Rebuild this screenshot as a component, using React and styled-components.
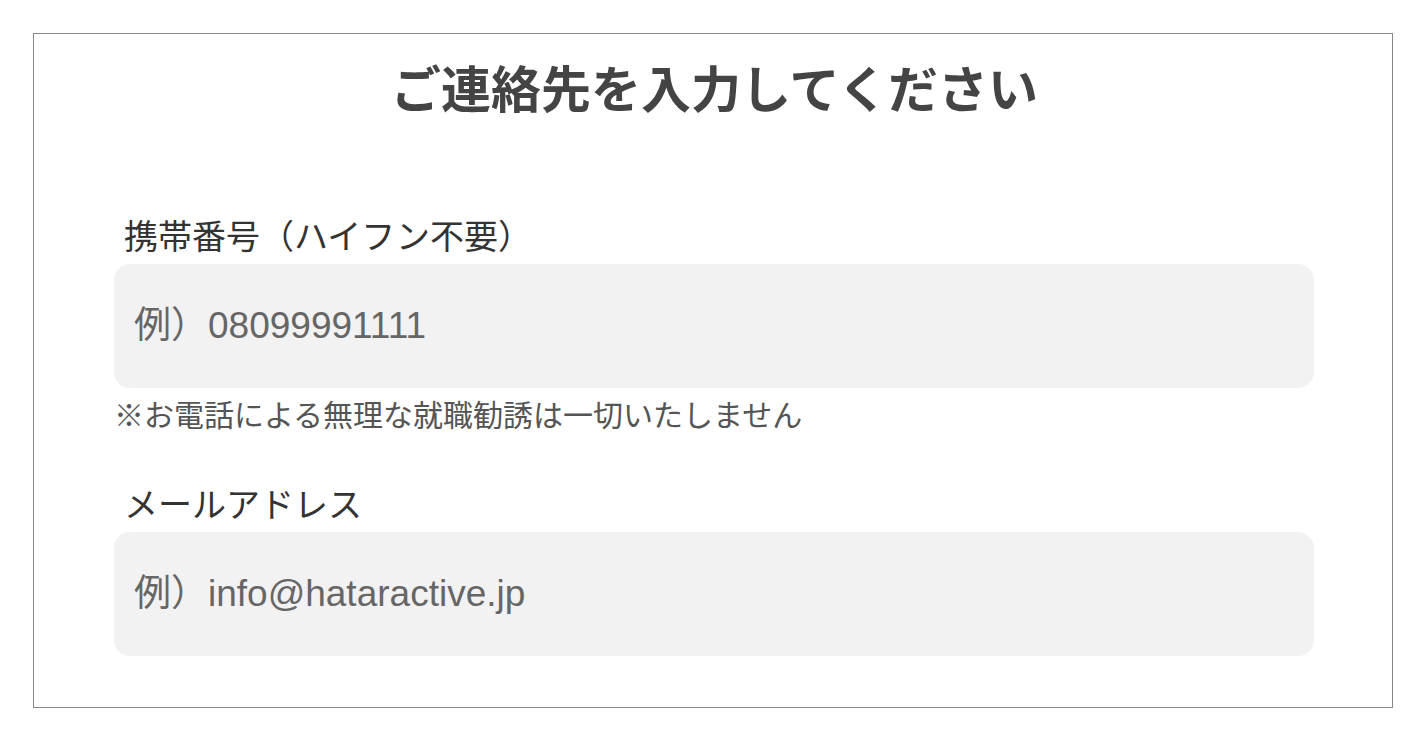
import React from "react";
import styled, { createGlobalStyle } from "styled-components";

const Global = createGlobalStyle`
  html, body { margin: 0; padding: 0; background: #fff; }
  body { font-family: "Liberation Sans", "Noto Sans CJK JP", sans-serif; }
  * { box-sizing: border-box; }
`;

const Page = styled.div`
  padding: 33px 0 0 33px;
`;

const Card = styled.section`
  width: 1360px;
  height: 675px;
  border: 1px solid #888;
  padding: 22px 77px 0 80px;
`;

const Title = styled.h1`
  margin: 0;
  text-align: center;
  font-size: 50px;
  line-height: 60px;
  font-weight: 700;
  color: #444;
  font-family: "Noto Sans CJK JP", sans-serif;
`;

const Field = styled.div`
  display: flex;
  flex-direction: column;
  margin-top: ${(p) => p.$top}px;
`;

const Label = styled.label`
  font-family: "Noto Sans CJK JP", sans-serif;
  font-size: 34px;
  line-height: 46px;
  color: #333;
  padding-left: 10px;
  margin-bottom: 6px;
`;

const Input = styled.input`
  width: 1200px;
  height: 124px;
  border: none;
  outline: none;
  border-radius: 16px;
  background: #f2f2f2;
  padding: 0 20px;
  font-family: "Liberation Sans", "Noto Sans CJK JP", sans-serif;
  font-size: 37px;
  color: #333;
  &::placeholder {
    color: #666;
  }
`;

const Note = styled.p`
  margin: 4px 0 0;
  font-family: "Noto Sans CJK JP", sans-serif;
  font-size: 30px;
  line-height: 42px;
  color: #555;
`;

export default function App() {
  return (
    <>
      <Global />
      <Page>
        <Card>
          <Title>ご連絡先を入力してください</Title>
          <Field $top={96}>
            <Label>携帯番号（ハイフン不要）</Label>
            <Input type="tel" placeholder="例）08099991111" />
            <Note>※お電話による無理な就職勧誘は一切いたしません</Note>
          </Field>
          <Field $top={46}>
            <Label>メールアドレス</Label>
            <Input type="email" placeholder="例）info@hataractive.jp" />
          </Field>
        </Card>
      </Page>
    </>
  );
}
